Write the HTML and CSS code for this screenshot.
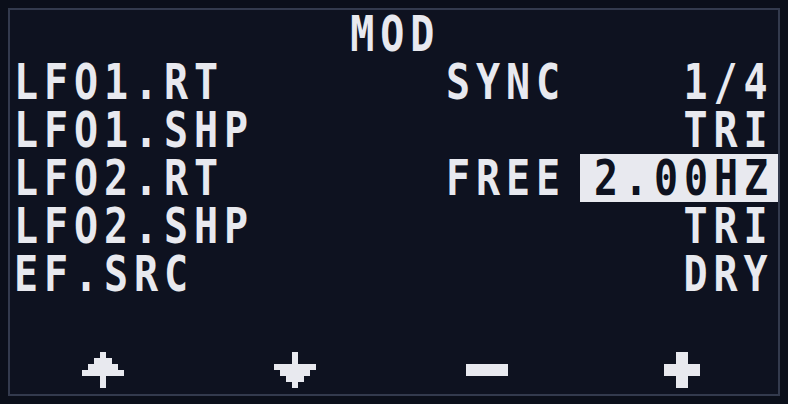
FILE: index.html
```html
<!DOCTYPE html>
<html>
<head>
<meta charset="utf-8">
<link rel="stylesheet" href="styles.css">
</head>
<body>
<div class="screen">
  <div class="title"><span class="t">MOD</span></div>
  <div class="rows">
    <div class="row"><span class="label"><span class="t">LFO1.RT</span></span><span class="mode"><span class="t">SYNC</span></span><span class="value"><span class="t">1/4</span></span></div>
    <div class="row"><span class="label"><span class="t">LFO1.SHP</span></span><span class="mode"></span><span class="value"><span class="t">TRI</span></span></div>
    <div class="row"><span class="label"><span class="t">LFO2.RT</span></span><span class="mode"><span class="t">FREE</span></span><span class="value selected"><span class="t">2.00HZ</span></span></div>
    <div class="row"><span class="label"><span class="t">LFO2.SHP</span></span><span class="mode"></span><span class="value"><span class="t">TRI</span></span></div>
    <div class="row"><span class="label"><span class="t">EF.SRC</span></span><span class="mode"></span><span class="value"><span class="t">DRY</span></span></div>
  </div>
  <div class="footer">
    <div class="key">
      <svg class="icon" viewBox="0 0 7 6" shape-rendering="crispEdges"><path d="M3 0h1v1h1v1h1v1h1v1H4v2H3V4H0V3h1V2h1V1h1z" fill="#e8e9ef"/></svg>
    </div>
    <div class="key">
      <svg class="icon" viewBox="0 0 7 6" shape-rendering="crispEdges"><path d="M3 0h1v2h3v1H6v1H5v1H4v1H3V5H2V4H1V3H0V2h3z" fill="#e8e9ef"/></svg>
    </div>
    <div class="key">
      <svg class="icon" viewBox="0 0 7 6" shape-rendering="crispEdges"><path d="M0 2h7v2H0z" fill="#e8e9ef"/></svg>
    </div>
    <div class="key">
      <svg class="icon" viewBox="0 0 7 6" shape-rendering="crispEdges"><path d="M3 0h2v2h2v2H5v2H3V4H1V2h2z" fill="#e8e9ef"/></svg>
    </div>
  </div>
</div>
</body>
</html>
```
FILE: styles.css
```css
html, body {
  margin: 0;
  padding: 0;
  background: #0b0f1a;
}
body {
  width: 788px;
  height: 404px;
  overflow: hidden;
  font-family: "DejaVu Sans Mono", "Liberation Mono", monospace;
  font-weight: bold;
  font-size: 50px;
  color: #e8e9ef;
}
.screen {
  margin: 8px;
  width: 768px;
  height: 384px;
  border: 2px solid #333a4d;
  background: #0e1220;
  display: flex;
  flex-direction: column;
}
.t {
  display: inline-block;
  white-space: nowrap;
  letter-spacing: 7.4px;
  transform: scaleX(0.8);
  transform-origin: left center;
}
.title {
  height: 48px;
  line-height: 48px;
  text-align: center;
  padding-left: 2px;
}
.title .t {
  transform-origin: center center;
}
.rows {
  display: flex;
  flex-direction: column;
}
.row {
  display: grid;
  grid-template-columns: 432px 134px 198px;
  height: 48px;
  line-height: 48px;
  padding-left: 4px;
  white-space: nowrap;
}
.value {
  display: flex;
  justify-content: flex-end;
  padding-right: 4px;
}
.value .t {
  flex-shrink: 0;
  transform-origin: right center;
}
.value.selected {
  background: #e8e9ef;
  color: #0e1220;
}
.footer {
  margin-top: auto;
  margin-left: -3px;
  padding-bottom: 6px;
  display: grid;
  grid-template-columns: repeat(4, 192px);
}
.key {
  display: flex;
  justify-content: center;
}
.icon {
  width: 42px;
  height: 36px;
  display: block;
}
```
